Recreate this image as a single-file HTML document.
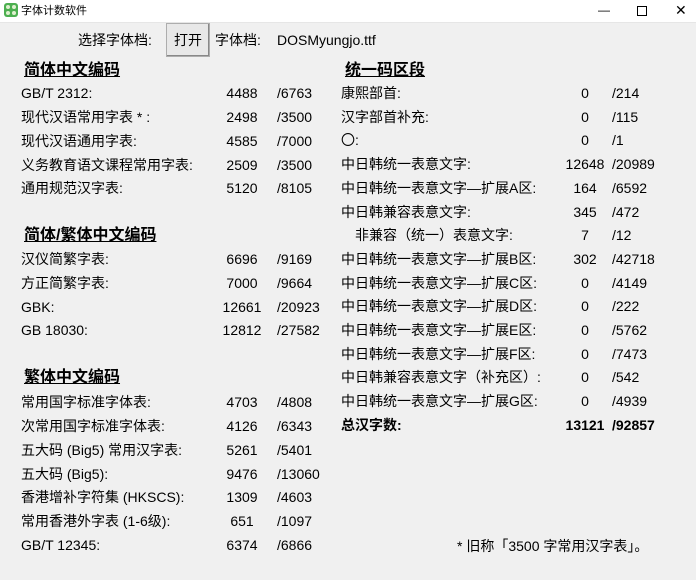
<!DOCTYPE html><html><head><meta charset="utf-8"><style>
body{margin:0;width:696px;height:580px;overflow:hidden;background:#f0f0f0;font-family:"Liberation Sans","Noto Sans CJK SC",sans-serif;font-size:14px;color:#000;position:relative}
.tb{position:absolute;left:0;top:0;width:696px;height:22px;background:#fff;border-bottom:1px solid #e6e6e6}
.t{position:absolute;white-space:nowrap;line-height:18px}
.h{font-weight:bold;text-decoration:underline;font-size:16px}
.n{position:absolute;white-space:nowrap;line-height:18px;text-align:center;width:60px}
.btn{position:absolute;left:166px;top:23px;width:42px;height:32px;background:#e8e8e8;border:1px solid #adadad;box-shadow:inset -1px -1px #888;text-align:center;line-height:32px}
</style></head><body>
<div class="tb">
<svg style="position:absolute;left:4px;top:3px" width="14" height="14"><rect width="14" height="14" rx="3" fill="#4caf50"/><circle cx="4" cy="4" r="2" fill="#e0f0d0"/><circle cx="10" cy="4" r="2" fill="#e0f0d0"/><circle cx="4" cy="10" r="2" fill="#e0f0d0"/><circle cx="10" cy="10" r="2" fill="#e0f0d0"/></svg>
<div class="t" style="left:21px;top:2px;font-size:11px">字体计数软件</div>
<div class="t" style="left:598px;top:1px;font-size:12px">—</div>
<div style="position:absolute;left:637px;top:6px;width:8px;height:8px;border:1px solid #000"></div>
<div class="t" style="left:675px;top:1px;font-size:14px">✕</div>
</div>
<div class="t" style="left:78px;top:31px">选择字体档:</div>
<div class="btn">打开</div>
<div class="t" style="left:215px;top:31px">字体档:</div>
<div class="t" style="left:277px;top:31px">DOSMyungjo.ttf</div>

<div class="t h" style="left:24px;top:62px">简体中文编码</div>
<div class="t h" style="left:24px;top:227px">简体/繁体中文编码</div>
<div class="t h" style="left:24px;top:369px">繁体中文编码</div>
<div class="t h" style="left:345px;top:62px">统一码区段</div>

<script>
function add(x,y,a,c,nx,dx){
 var d=document.createElement('div');d.className='t';d.style.left=x+'px';d.style.top=(y-9)+'px';d.textContent=a[0];if(c)d.style.fontWeight='bold';document.body.appendChild(d);
 d=document.createElement('div');d.className='n';d.style.left=(nx-30)+'px';d.style.top=(y-9)+'px';d.textContent=a[1];if(c)d.style.fontWeight='bold';document.body.appendChild(d);
 d=document.createElement('div');d.className='t';d.style.left=dx+'px';d.style.top=(y-9)+'px';d.textContent=a[2];if(c)d.style.fontWeight='bold';document.body.appendChild(d);
}
var L=[[93,"GB/T 2312:","4488","/6763"],[117,"现代汉语常用字表 * :","2498","/3500"],[141,"现代汉语通用字表:","4585","/7000"],[165,"义务教育语文课程常用字表:","2509","/3500"],[188,"通用规范汉字表:","5120","/8105"],
[259,"汉仪简繁字表:","6696","/9169"],[283,"方正简繁字表:","7000","/9664"],[307,"GBK:","12661","/20923"],[330,"GB 18030:","12812","/27582"],
[402,"常用国字标准字体表:","4703","/4808"],[426,"次常用国字标准字体表:","4126","/6343"],[450,"五大码 (Big5) 常用汉字表:","5261","/5401"],[474,"五大码 (Big5):","9476","/13060"],[497,"香港增补字符集 (HKSCS):","1309","/4603"],[521,"常用香港外字表 (1-6级):","651","/1097"],[545,"GB/T 12345:","6374","/6866"]];
L.forEach(function(r){add(21,r[0],[r[1],r[2],r[3]],0,242,277)});
var R=[["康熙部首:","0","/214"],["汉字部首补充:","0","/115"],["〇:","0","/1"],["中日韩统一表意文字:","12648","/20989"],["中日韩统一表意文字—扩展A区:","164","/6592"],["中日韩兼容表意文字:","345","/472"],["　非兼容（统一）表意文字:","7","/12"],["中日韩统一表意文字—扩展B区:","302","/42718"],["中日韩统一表意文字—扩展C区:","0","/4149"],["中日韩统一表意文字—扩展D区:","0","/222"],["中日韩统一表意文字—扩展E区:","0","/5762"],["中日韩统一表意文字—扩展F区:","0","/7473"],["中日韩兼容表意文字（补充区）:","0","/542"],["中日韩统一表意文字—扩展G区:","0","/4939"],["总汉字数:","13121","/92857"]];
R.forEach(function(r,i){add(341,93+i*23.7,r,i==14,585,612)});
</script>
<div class="t" style="left:457px;top:537px">* 旧称「3500 字常用汉字表」。</div>
</body></html>
